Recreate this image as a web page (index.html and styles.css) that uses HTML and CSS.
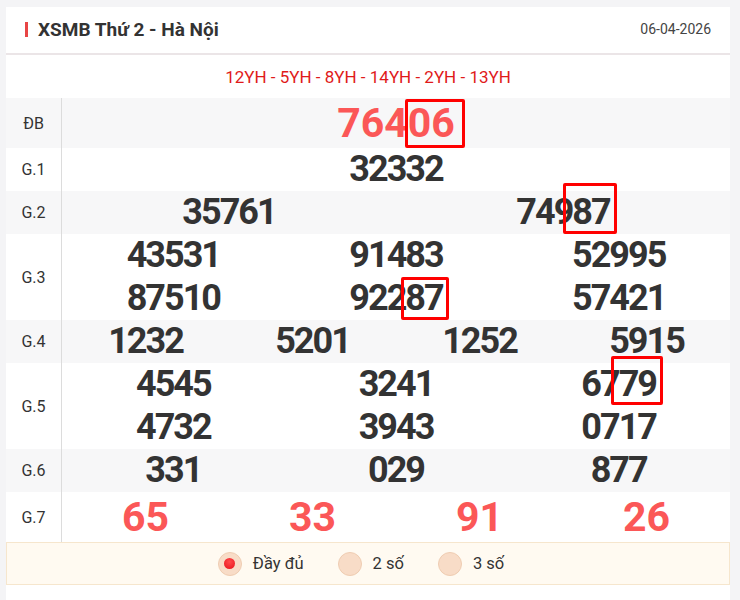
FILE: index.html
```html
<!DOCTYPE html>
<html lang="vi">
<head>
<meta charset="utf-8">
<title>XSMB Thứ 2 - Hà Nội</title>
<link rel="stylesheet" href="styles.css">
</head>
<body>
<div class="card">
  <div class="head">
    <h1 class="title">XSMB Thứ 2 - Hà Nội</h1>
    <span class="date">06-04-2026</span>
  </div>
  <div class="codes">12YH - 5YH - 8YH - 14YH - 2YH - 13YH</div>
  <div class="table">
    <div class="row alt row-db">
      <div class="label">ĐB</div>
      <div class="nums c1"><span class="num db">764<span class="hl hl-db">06</span></span></div>
    </div>
    <div class="row">
      <div class="label">G.1</div>
      <div class="nums c1"><span class="num">32332</span></div>
    </div>
    <div class="row alt">
      <div class="label">G.2</div>
      <div class="nums c2"><span class="num">35761</span><span class="num">749<span class="hl hl-g2">87</span></span></div>
    </div>
    <div class="row">
      <div class="label">G.3</div>
      <div class="nums c3">
        <span class="num">43531</span><span class="num">91483</span><span class="num">52995</span>
        <span class="num">87510</span><span class="num">922<span class="hl hl-g3">87</span></span><span class="num">57421</span>
      </div>
    </div>
    <div class="row alt">
      <div class="label">G.4</div>
      <div class="nums c4"><span class="num">1232</span><span class="num">5201</span><span class="num">1252</span><span class="num">5915</span></div>
    </div>
    <div class="row">
      <div class="label">G.5</div>
      <div class="nums c3">
        <span class="num">4545</span><span class="num">3241</span><span class="num">67<span class="hl hl-g5">79</span></span>
        <span class="num">4732</span><span class="num">3943</span><span class="num">0717</span>
      </div>
    </div>
    <div class="row alt">
      <div class="label">G.6</div>
      <div class="nums c3"><span class="num">331</span><span class="num">029</span><span class="num">877</span></div>
    </div>
    <div class="row row-g7">
      <div class="label">G.7</div>
      <div class="nums c4"><span class="num red">65</span><span class="num red">33</span><span class="num red">91</span><span class="num red">26</span></div>
    </div>
  </div>
  <div class="footer">
    <label class="opt"><span class="radio on"></span><span>Đầy đủ</span></label>
    <label class="opt"><span class="radio"></span><span>2 số</span></label>
    <label class="opt"><span class="radio"></span><span>3 số</span></label>
  </div>
</div>
</body>
</html>
```

FILE: styles.css
```css
* { box-sizing: border-box; }
html, body { margin: 0; padding: 0; }
body {
  background: #f4f4f6;
  font-family: Roboto, "Noto Sans", sans-serif;
  color: #333;
  padding: 7px 10px 0 6px;
}
.card {
  background: #fff;
  padding-bottom: 20px;
}
.head {
  display: flex;
  align-items: center;
  justify-content: space-between;
  height: 48px;
  padding: 0 19px 2px 19px;
  border-bottom: 2px solid #ebe5e7;
}
.title {
  margin: 0;
  font-size: 19px;
  font-weight: 700;
  color: #333;
  display: flex;
  align-items: center;
}
.title::before {
  content: "";
  width: 3px;
  height: 15px;
  background: #e84545;
  margin-right: 10px;
}
.date {
  font-size: 14px;
  color: #444;
}
.codes {
  height: 43px;
  display: flex;
  align-items: center;
  justify-content: center;
  color: #e01a1a;
  font-size: 17px;
}
.row {
  display: grid;
  grid-template-columns: 56px 1fr;
  background: #fff;
}
.row.alt { background: #f7f7f8; }
.label {
  display: flex;
  align-items: center;
  justify-content: center;
  font-size: 16px;
  color: #333;
  border-right: 1px solid #dcdcdc;
}
.nums {
  display: grid;
  justify-items: center;
}
.c1 { grid-template-columns: 1fr; }
.c2 { grid-template-columns: repeat(2, 1fr); }
.c3 { grid-template-columns: repeat(3, 1fr); }
.c4 { grid-template-columns: repeat(4, 1fr); }
.num {
  font-size: 36px;
  font-weight: 700;
  line-height: 43px;
  color: #333;
  letter-spacing: -2px;
}
.row-db .num, .row-g7 .num {
  font-size: 41px;
  line-height: 50px;
  letter-spacing: 0;
}
.num.db, .num.red { color: #fb5757; }
.hl { position: relative; }
.hl::after {
  content: "";
  position: absolute;
  border: 3px solid #f00;
  border-radius: 2px;
}
.hl-db::after { top: 0; bottom: -1px; left: -3px; right: -10px; }
.hl-g2::after { top: -8px; bottom: -1px; left: -9px; right: -7px; }
.hl-g3::after { top: 0; bottom: -1px; left: -4px; right: -6px; }
.hl-g5::after { top: -7px; bottom: 0; left: -8px; right: -7px; }
.footer {
  height: 43px;
  background: #fffaf1;
  border: 1px solid #f6e6cd;
  display: flex;
  align-items: center;
  justify-content: center;
  gap: 34px;
  padding-right: 14px;
}
.opt {
  display: flex;
  align-items: center;
  gap: 11px;
  font-size: 16.5px;
  color: #333;
}
.radio {
  width: 24px;
  height: 24px;
  border-radius: 50%;
  background: #f8dcc7;
  border: 1px solid #efcdb2;
  display: flex;
  align-items: center;
  justify-content: center;
}
.radio.on::after {
  content: "";
  width: 11px;
  height: 11px;
  border-radius: 50%;
  background: radial-gradient(circle at 50% 35%, #ff4a4a, #e8121b);
}
```
